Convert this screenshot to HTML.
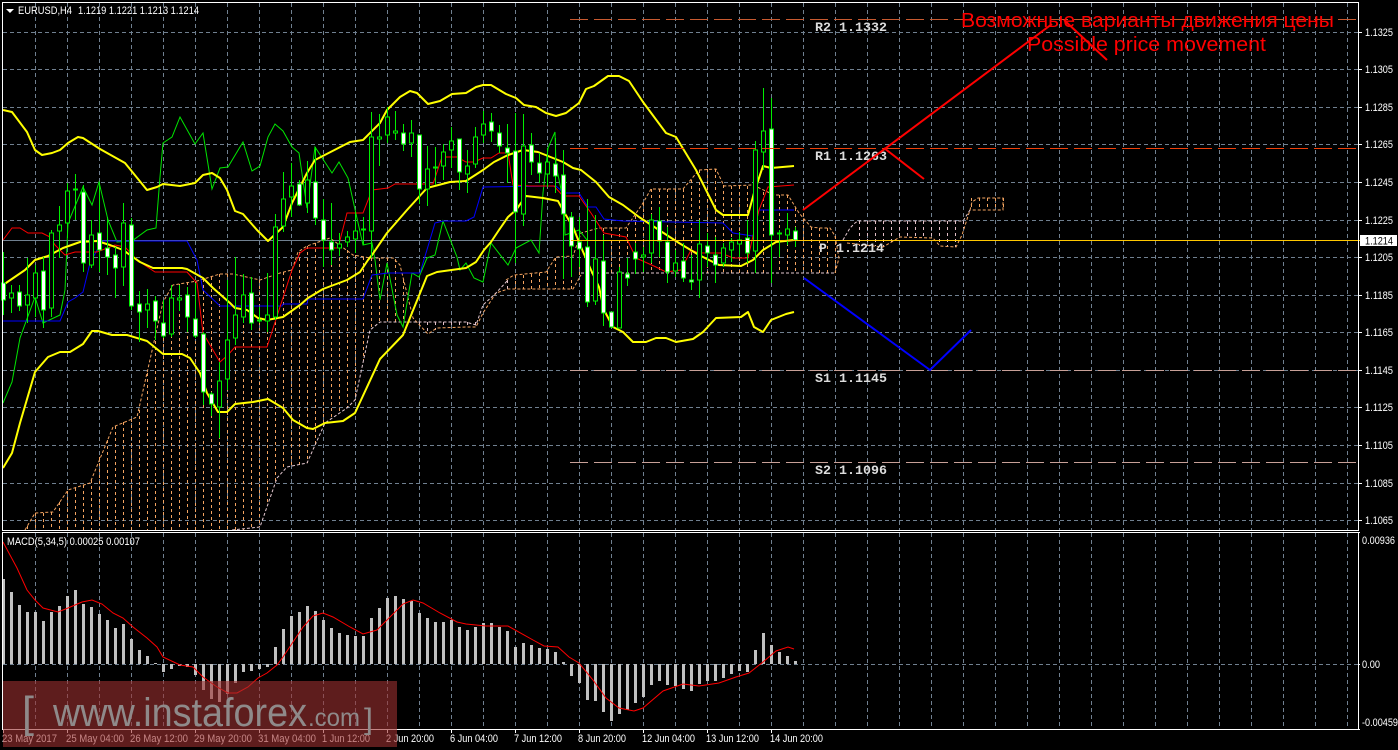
<!DOCTYPE html>
<html><head><meta charset="utf-8"><title>EURUSD,H4</title>
<style>html,body{margin:0;padding:0;background:#000;width:1398px;height:750px;overflow:hidden}svg{display:block}
.t{font-family:"Liberation Sans",sans-serif;font-size:11px;fill:#fff}
.m{font-family:"Liberation Mono",monospace;font-size:13px;font-weight:bold;fill:#ddd}
.f{fill:none}
</style></head><body>
<svg xmlns="http://www.w3.org/2000/svg" width="1398" height="750" viewBox="0 0 1398 750">
<rect width="1398" height="750" fill="#000"/>
<!-- grid -->
<g stroke="#708090" stroke-width="1" stroke-dasharray="4 3" shape-rendering="crispEdges" fill="none">
<path d="M3 32.5H1358M3 69.5H1358M3 107.5H1358M3 144.5H1358M3 182.5H1358M3 220.5H1358M3 257.5H1358M3 295.5H1358M3 332.5H1358M3 370.5H1358M3 407.5H1358M3 445.5H1358M3 483.5H1358M3 520.5H1358M3 664.5H1358"/>
<path d="M35.5 3V530M67.5 3V530M99.5 3V530M131.5 3V530M163.5 3V530M195.5 3V530M227.5 3V530M259.5 3V530M291.5 3V530M323.5 3V530M355.5 3V530M387.5 3V530M419.5 3V530M451.5 3V530M483.5 3V530M515.5 3V530M547.5 3V530M579.5 3V530M611.5 3V530M643.5 3V530M675.5 3V530M707.5 3V530M739.5 3V530M771.5 3V530M803.5 3V530M835.5 3V530M867.5 3V530M899.5 3V530M931.5 3V530M963.5 3V530M995.5 3V530M1027.5 3V530M1059.5 3V530M1091.5 3V530M1123.5 3V530M1155.5 3V530M1187.5 3V530M1219.5 3V530M1251.5 3V530M1283.5 3V530M1315.5 3V530M1347.5 3V530"/>
<path d="M35.5 533V729M67.5 533V729M99.5 533V729M131.5 533V729M163.5 533V729M195.5 533V729M227.5 533V729M259.5 533V729M291.5 533V729M323.5 533V729M355.5 533V729M387.5 533V729M419.5 533V729M451.5 533V729M483.5 533V729M515.5 533V729M547.5 533V729M579.5 533V729M611.5 533V729M643.5 533V729M675.5 533V729M707.5 533V729M739.5 533V729M771.5 533V729M803.5 533V729M835.5 533V729M867.5 533V729M899.5 533V729M931.5 533V729M963.5 533V729M995.5 533V729M1027.5 533V729M1059.5 533V729M1091.5 533V729M1123.5 533V729M1155.5 533V729M1187.5 533V729M1219.5 533V729M1251.5 533V729M1283.5 533V729M1315.5 533V729M1347.5 533V729"/>
</g>
<!-- period / price lines -->
<path d="M3 240.5H571" stroke="#708090" fill="none" shape-rendering="crispEdges"/>
<!-- cloud columns -->
<g fill="none" stroke-width="1" stroke-dasharray="3 3" shape-rendering="crispEdges">
<path stroke="#f4a460" d="M27.5 526V530M35.5 513V530M43.5 513V530M51.5 512V530M59.5 502V530M67.5 491V530M75.5 488V530M83.5 485V530M91.5 480V530M99.5 457V530M107.5 440V530M115.5 426V530M123.5 422V530M131.5 419V530M139.5 410V530M147.5 373V530M155.5 335V530M163.5 302V530M171.5 287V530M179.5 284V530M187.5 282V530M195.5 281V530M203.5 279V530M211.5 277V530M219.5 274V530M227.5 274V530M235.5 275V530M243.5 277V530M251.5 278V527M259.5 280V527M267.5 277V505M275.5 274V482M283.5 272V470M291.5 270V466M299.5 252V465M307.5 246V463M315.5 243V445M323.5 240V427M331.5 240V418M339.5 246V412M347.5 250V407M355.5 255V400M363.5 257V360M371.5 258V329M379.5 258V322M387.5 258V322M395.5 259V322M403.5 280V320M515.5 275V289M523.5 275V289M531.5 274V289M539.5 273V289M547.5 271V289M555.5 258V289M563.5 257V289M571.5 256V289M579.5 236V275M587.5 231V273M595.5 229V273M603.5 228V273M611.5 228V273M619.5 228V273M627.5 228V273M635.5 216V273M643.5 203V273M651.5 189V273M659.5 189V273M667.5 189V273M675.5 189V273M683.5 189V273M691.5 180V273M699.5 170V273M707.5 169V273M715.5 169V273M723.5 185V273M731.5 186V273M739.5 186V273M747.5 186V273M755.5 188V273M763.5 192V273M771.5 195V273M779.5 195V273M787.5 195V273M795.5 208V273M803.5 213V273M811.5 227V273M819.5 228V273M827.5 228V273M835.5 236V273M971.5 198V210M979.5 198V210M987.5 198V210M995.5 198V210M1003.5 198V210"/>
<path stroke="#e4c0c8" d="M419.5 322V328M427.5 322V334M435.5 322V330M443.5 322V328M451.5 322V327M459.5 322V327M467.5 322V326M475.5 322V327M507.5 280V289M859.5 221V246M867.5 221V246M875.5 221V246M883.5 221V247M891.5 221V245M899.5 221V237M907.5 221V238M915.5 221V238M923.5 221V238M931.5 221V238M939.5 221V245M947.5 221V247M955.5 221V247M963.5 221V228"/>
</g>
<g fill="none" stroke-width="1" stroke-dasharray="3 2">
<polyline stroke="#f4a460" points="25,530 35,513 53,512 68,490 90,483 113,427 137,417 147,373 163,302 173,285 197,281 220,274 233,274 260,280 280,273 292,270 298,252 307,246 330,238 353,255 370,258 393,258 400,265 413,318 428,334 437,328 466,327 476,327 483,313 496,293 508,289 573,289 581,275"/>
<polyline stroke="#f4a460" points="506,280 514,275 546,272 556,257 573,256 581,233 599,228 626,228 643,203 651,189 683,189 699,170 716,169 724,186 753,185 774,195 788,195 799,213 811,227 819,228 830,228 835,236 839,258 835,273"/>
<polyline stroke="#f4a460" points="847,243 883,247 900,237 933,238 940,246 956,247 962,235 970,210 972,202 978,198 1003,198 1003,210 970,210"/>
<polyline stroke="#e4c8d0" points="232,530 260,527 277,478 287,467 307,463 325,423 347,408 355,400 370,330 380,322 466,322 476,325 483,305 496,293 508,280"/>
<polyline stroke="#e4c8d0" points="581,273 836,273"/>
<polyline stroke="#e4c8d0" points="843,240 850,228 855,223 858,221 963,221 970,210"/>
</g>
<!-- chikou green -->
<polyline class="f" stroke="#00e600" points="3,403 12,382 20,338 35,297 43,323 60,315 65,290 68,223 83,187 92,205 99,182 108,220 117,242 132,241 147,230 156,228 160,177 163,143 172,137 180,117 195,144 203,133 212,189 220,168 228,167 243,142 252,171 260,166 268,137 275,124 283,131 292,147 299,153 307,208 315,147 332,173 339,162 348,178 363,245 372,243 375,260 380,300 387,263 397,315 403,327 412,273 419,277 427,258 435,255 443,221 457,257 460,270 466,263 474,278 483,282 491,243 508,265 516,248 531,240 539,253 543,193 548,148 555,132 556,165 564,204 565,235 579,230 587,240"/>
<!-- kijun blue -->
<polyline class="f" stroke="#0000ff" points="3,321 60,321 68,302 75,298 83,292 90,263 102,241 187,241 197,260 203,290 220,306 282,306 283,304 307,304 308,299 363,299 372,275 388,273 420,273 435,223 443,221 466,221 474,217 483,187 556,186 564,193 579,193 588,207 596,207 604,219 623,221 723,223 733,233 753,236 759,210 794,210"/>
<!-- tenkan red -->
<polyline class="f" stroke="#ff0000" points="3,240 12,228 20,228 28,233 42,233 50,237 55,245 65,255 75,252 97,252 115,245 125,247 137,260 155,272 187,272 197,283 203,333 220,362 228,355 235,347 267,347 292,270 300,253 307,248 338,248 347,213 363,213 372,190 388,188 395,184 433,184 442,157 457,157 466,162 474,162 483,158 491,158 499,153 508,153 513,185 529,186 554,186 563,196 579,196 591,213 604,233 626,237 636,258 656,267 666,272 681,270 691,250 699,253 721,253 733,258 748,258 759,210 768,187 794,185"/>
<!-- bollinger yellow -->
<g fill="none" stroke="#ffff00" stroke-width="2" stroke-linejoin="round">
<polyline points="3,110 12,112 27,132 35,150 42,155 52,153 60,150 68,143 78,137 83,138 100,149 125,163 147,190 157,187 163,184 180,186 195,183 203,175 212,173 220,178 227,190 235,211 243,214 257,230 268,241 283,227 292,203 307,173 315,160 350,142 363,140 380,123 387,110 400,97 410,91 417,93 428,104 440,101 452,94 466,93 476,87 483,85 491,85 506,94 516,98 524,105 536,107 546,113 556,116 566,113 579,103 586,89 594,86 608,76 619,76 629,81 643,102 666,133 676,137 696,170 716,210 723,215 748,215 754,193 763,166 771,168 794,166"/>
<polyline points="3,285 25,270 35,260 48,256 63,248 80,242 97,241 110,245 123,250 140,262 153,268 182,268 187,269 203,278 213,288 230,303 235,308 247,310 258,318 267,320 283,317 300,305 308,298 323,289 347,280 360,272 368,260 372,255 387,233 407,210 427,188 450,182 466,181 483,170 494,162 508,155 523,150 538,152 563,162 573,168 581,170 596,182 609,197 623,205 639,217 659,230 679,243 699,255 719,265 741,266 753,260 763,250 776,242 794,240"/>
<polyline points="3,468 12,453 20,423 35,372 48,357 60,352 70,352 83,344 92,331 98,331 112,335 127,335 147,341 163,354 182,354 190,358 200,373 207,393 218,412 227,412 235,404 253,402 268,399 283,408 293,420 307,428 313,429 325,423 343,421 355,413 380,359 403,335 427,276 437,272 466,268 476,262 484,250 491,242 499,230 508,217 516,210 526,196 543,198 558,201 564,212 573,227 581,247 591,270 599,287 604,310 613,327 623,332 633,342 646,342 656,338 666,338 676,342 693,339 703,332 716,318 741,317 748,312 754,327 763,332 771,320 786,314 794,312"/>
</g>
<!-- candles -->
<g shape-rendering="crispEdges" stroke="#00ee00" stroke-width="1">
<path fill="none" d="M3.5 252V315M11.5 285V313M19.5 285V311M27.5 258V323M35.5 265V317M43.5 257V328M51.5 230V317M59.5 206V258M67.5 183V238M75.5 174V220M83.5 185V272M91.5 220V268M99.5 182V272M107.5 217V275M115.5 247V298M123.5 203V286M131.5 218V310M139.5 291V342M147.5 289V328M155.5 296V340M163.5 300V338M171.5 285V337M179.5 285V311M187.5 287V332M195.5 283V338M203.5 332V405M211.5 392V416M219.5 362V438M227.5 280V390M235.5 257V345M243.5 274V323M251.5 277V330M259.5 307V323M267.5 273V332M275.5 214V320M283.5 172V232M291.5 163V217M299.5 180V206M307.5 161V213M315.5 147V225M323.5 199V267M331.5 203V265M339.5 233V256M347.5 231V247M355.5 212V253M363.5 217V245M371.5 112V258M379.5 114V166M387.5 107V143M395.5 111V140M403.5 124V151M411.5 120V157M419.5 135V204M427.5 146V206M435.5 147V185M443.5 144V180M451.5 127V168M459.5 139V190M467.5 150V193M475.5 127V168M483.5 111V143M491.5 113V142M499.5 125V153M507.5 124V183M515.5 113V263M523.5 114V226M531.5 133V175M539.5 153V183M547.5 148V187M555.5 138V193M563.5 150V279M571.5 212V277M579.5 217V267M587.5 199V307M595.5 215V305M603.5 235V326M611.5 312V328M619.5 267V328M627.5 258V286M635.5 243V274M643.5 247V272M651.5 214V263M659.5 207V257M667.5 227V283M675.5 250V277M683.5 243V282M691.5 255V290M699.5 220V298M707.5 233V267M715.5 237V283M723.5 243V267M731.5 238V262M739.5 232V257M747.5 220V263M755.5 141V273M763.5 88V170M771.5 98V283M779.5 230V257M787.5 213V245M795.5 227V247"/>
<path fill="#000" d="M9.5 293h4V298h-4zM25.5 295h4V305h-4zM33.5 273h4V298h-4zM49.5 233h4V308h-4zM57.5 225h4V231h-4zM65.5 191h4V223h-4zM73.5 189h4V190h-4zM89.5 235h4V265h-4zM121.5 223h4V267h-4zM145.5 304h4V310h-4zM169.5 298h4V334h-4zM177.5 298h4V300h-4zM217.5 381h4V407h-4zM225.5 340h4V379h-4zM233.5 315h4V338h-4zM241.5 295h4V317h-4zM257.5 320h4V321h-4zM265.5 315h4V321h-4zM273.5 227h4V317h-4zM281.5 199h4V226h-4zM289.5 186h4V197h-4zM305.5 180h4V203h-4zM337.5 244h4V248h-4zM345.5 237h4V242h-4zM353.5 231h4V239h-4zM361.5 229h4V230h-4zM369.5 137h4V231h-4zM377.5 137h4V139h-4zM385.5 117h4V135h-4zM393.5 131h4V133h-4zM409.5 133h4V143h-4zM425.5 169h4V189h-4zM433.5 167h4V168h-4zM441.5 152h4V166h-4zM449.5 141h4V150h-4zM465.5 166h4V174h-4zM473.5 137h4V164h-4zM481.5 124h4V135h-4zM521.5 146h4V214h-4zM545.5 162h4V174h-4zM593.5 259h4V301h-4zM617.5 272h4V328h-4zM641.5 255h4V257h-4zM649.5 220h4V253h-4zM673.5 263h4V271h-4zM697.5 244h4V280h-4zM721.5 248h4V263h-4zM729.5 242h4V250h-4zM737.5 240h4V244h-4zM753.5 150h4V251h-4zM761.5 131h4V152h-4zM777.5 233h4V234h-4zM785.5 229h4V235h-4z"/>
<path fill="#fff" d="M1.5 283h4V300h-4zM17.5 292h4V306h-4zM41.5 271h4V310h-4zM81.5 192h4V263h-4zM97.5 233h4V250h-4zM105.5 248h4V257h-4zM113.5 255h4V268h-4zM129.5 225h4V306h-4zM137.5 304h4V312h-4zM153.5 301h4V321h-4zM161.5 323h4V336h-4zM185.5 295h4V317h-4zM193.5 319h4V336h-4zM201.5 334h4V392h-4zM209.5 394h4V404h-4zM249.5 293h4V323h-4zM297.5 184h4V205h-4zM313.5 182h4V218h-4zM321.5 220h4V240h-4zM329.5 242h4V250h-4zM401.5 133h4V144h-4zM417.5 135h4V189h-4zM457.5 139h4V172h-4zM489.5 122h4V131h-4zM497.5 133h4V146h-4zM505.5 148h4V153h-4zM513.5 151h4V212h-4zM529.5 145h4V162h-4zM537.5 163h4V173h-4zM553.5 164h4V176h-4zM561.5 175h4V214h-4zM569.5 217h4V246h-4zM577.5 242h4V249h-4zM585.5 247h4V302h-4zM601.5 261h4V313h-4zM609.5 312h4V327h-4zM625.5 274h4V278h-4zM633.5 252h4V259h-4zM657.5 221h4V241h-4zM665.5 242h4V272h-4zM681.5 261h4V278h-4zM689.5 280h4V282h-4zM705.5 246h4V253h-4zM713.5 255h4V265h-4zM745.5 238h4V253h-4zM769.5 129h4V235h-4zM793.5 231h4V240h-4z"/>
</g>
<!-- pivot lines -->
<g fill="none" stroke-dasharray="18 6" shape-rendering="crispEdges">
<path stroke="#c85a30" d="M570 19.5H1358"/>
<path stroke="#f0400a" d="M570 148.5H1358"/>
<path stroke="#c8a098" d="M570 370.5H1358M570 462.5H1358"/>
</g>
<path d="M571 240.5H1360" stroke="#ffc800" fill="none" shape-rendering="crispEdges"/>
<!-- pivot labels -->
<text class="m" x="815" y="31" textLength="72" lengthAdjust="spacingAndGlyphs">R2 1.1332</text>
<text class="m" x="815" y="160" textLength="72" lengthAdjust="spacingAndGlyphs">R1 1.1263</text>
<text class="m" x="819" y="252">P</text>
<text class="m" x="836" y="252" textLength="48" lengthAdjust="spacingAndGlyphs">1.1214</text>
<text class="m" x="815" y="382" textLength="72" lengthAdjust="spacingAndGlyphs">S1 1.1145</text>
<text class="m" x="815" y="474" textLength="72" lengthAdjust="spacingAndGlyphs">S2 1.1096</text>
<!-- forecast lines -->
<g fill="none" stroke-width="2">
<polyline stroke="#ff0000" points="803,210 1052,24"/>
<polyline stroke="#ff0000" points="884,148 924,179"/>
<polyline stroke="#ff0000" points="1064,20 1107,60"/>
<polyline stroke="#0000ff" points="804,278 930,370 971,330"/>
</g>
<text x="961" y="27" font-family="'Liberation Sans',sans-serif" font-size="20" fill="#ff0000" textLength="373" lengthAdjust="spacingAndGlyphs">Возможные варианты движения цены</text>
<text x="1027" y="51" font-family="'Liberation Sans',sans-serif" font-size="20" fill="#ff0000" textLength="239" lengthAdjust="spacingAndGlyphs">Possible price movement</text>
<!-- macd bars -->
<path fill="none" stroke="#c0c0c0" stroke-width="3" shape-rendering="crispEdges" d="M3.5 664V579M11.5 664V592M19.5 664V605M27.5 664V612M35.5 664V612M43.5 664V621M51.5 664V612M59.5 664V606M67.5 664V596M75.5 664V590M83.5 664V604M91.5 664V607M99.5 664V614M107.5 664V620M115.5 664V628M123.5 664V624M131.5 664V639M139.5 664V650M147.5 664V656M155.5 664V663M163.5 664V672M171.5 664V669M179.5 664V666M187.5 664V667M195.5 664V675M203.5 664V690M211.5 664V699M219.5 664V702M227.5 664V694M235.5 664V683M243.5 664V672M251.5 664V671M259.5 664V669M267.5 664V667M275.5 664V647M283.5 664V629M291.5 664V616M299.5 664V612M307.5 664V606M315.5 664V611M323.5 664V620M331.5 664V628M339.5 664V633M347.5 664V635M355.5 664V636M363.5 664V636M371.5 664V618M379.5 664V608M387.5 664V598M395.5 664V596M403.5 664V599M411.5 664V601M419.5 664V613M427.5 664V618M435.5 664V622M443.5 664V622M451.5 664V620M459.5 664V627M467.5 664V630M475.5 664V627M483.5 664V623M491.5 664V623M499.5 664V627M507.5 664V631M515.5 664V647M523.5 664V643M531.5 664V645M539.5 664V648M547.5 664V649M555.5 664V652M563.5 664V662M571.5 664V676M579.5 664V683M587.5 664V700M595.5 664V701M603.5 664V712M611.5 664V721M619.5 664V714M627.5 664V710M635.5 664V703M643.5 664V697M651.5 664V685M659.5 664V681M667.5 664V685M675.5 664V686M683.5 664V689M691.5 664V691M699.5 664V684M707.5 664V681M715.5 664V681M723.5 664V678M731.5 664V674M739.5 664V671M747.5 664V672M755.5 664V650M763.5 664V633M771.5 664V645M779.5 664V652M787.5 664V656M795.5 664V661"/>
<polyline class="f" stroke="#ff0000" points="3,542 17,568 27,590 35,600 43,608 58,612 68,608 82,602 92,600 102,604 113,613 123,618 133,627 147,638 157,647 163,657 180,665 193,667 203,677 217,687 228,693 237,693 248,687 258,678 267,673 277,665 283,657 293,642 303,627 313,616 323,613 333,617 350,627 363,634 377,630 390,617 403,604 413,600 423,603 440,613 457,622 466,624 486,626 508,626 533,640 544,646 558,647 569,657 579,663 593,680 606,698 619,708 634,711 643,708 663,691 683,684 699,686 719,683 736,677 749,673 763,662 776,651 788,647 794,649"/>
<!-- frames -->
<g fill="none" stroke="#fff" stroke-width="1" shape-rendering="crispEdges">
<path d="M2.5 2.5H1358.5V530.5H2.5ZM2.5 532.5H1358.5V729.5H2.5Z"/>
<path d="M1358 32.5h4M1358 69.5h4M1358 107.5h4M1358 144.5h4M1358 182.5h4M1358 220.5h4M1358 257.5h4M1358 295.5h4M1358 332.5h4M1358 370.5h4M1358 407.5h4M1358 445.5h4M1358 483.5h4M1358 520.5h4M1358 532.5h2M1358 664.5h2M1358 729.5h2"/>
<path d="M3.5 729V733M67.5 729V733M131.5 729V733M195.5 729V733M259.5 729V733M323.5 729V733M387.5 729V733M451.5 729V733M515.5 729V733M579.5 729V733M643.5 729V733M707.5 729V733M771.5 729V733"/>
</g>
<!-- header text -->
<path d="M6 9h8l-4 4z" fill="#fff"/>
<text class="t" x="18" y="14" textLength="54" lengthAdjust="spacingAndGlyphs">EURUSD,H4</text>
<text class="t" x="78" y="14" textLength="121" lengthAdjust="spacingAndGlyphs">1.1219 1.1221 1.1213 1.1214</text>
<text class="t" x="7" y="545" textLength="133" lengthAdjust="spacingAndGlyphs">MACD(5,34,5) 0.00025 0.00107</text>
<!-- axis labels -->
<g class="t">
<text class="t" x="1365" y="36" textLength="28" lengthAdjust="spacingAndGlyphs">1.1325</text>
<text class="t" x="1365" y="73" textLength="28" lengthAdjust="spacingAndGlyphs">1.1305</text>
<text class="t" x="1365" y="111" textLength="28" lengthAdjust="spacingAndGlyphs">1.1285</text>
<text class="t" x="1365" y="148" textLength="28" lengthAdjust="spacingAndGlyphs">1.1265</text>
<text class="t" x="1365" y="186" textLength="28" lengthAdjust="spacingAndGlyphs">1.1245</text>
<text class="t" x="1365" y="224" textLength="28" lengthAdjust="spacingAndGlyphs">1.1225</text>
<text class="t" x="1365" y="261" textLength="28" lengthAdjust="spacingAndGlyphs">1.1205</text>
<text class="t" x="1365" y="299" textLength="28" lengthAdjust="spacingAndGlyphs">1.1185</text>
<text class="t" x="1365" y="336" textLength="28" lengthAdjust="spacingAndGlyphs">1.1165</text>
<text class="t" x="1365" y="374" textLength="28" lengthAdjust="spacingAndGlyphs">1.1145</text>
<text class="t" x="1365" y="411" textLength="28" lengthAdjust="spacingAndGlyphs">1.1125</text>
<text class="t" x="1365" y="449" textLength="28" lengthAdjust="spacingAndGlyphs">1.1105</text>
<text class="t" x="1365" y="487" textLength="28" lengthAdjust="spacingAndGlyphs">1.1085</text>
<text class="t" x="1365" y="524" textLength="28" lengthAdjust="spacingAndGlyphs">1.1065</text>
<text class="t" x="1362" y="544" textLength="33" lengthAdjust="spacingAndGlyphs">0.00936</text>
<text class="t" x="1362" y="668" textLength="18" lengthAdjust="spacingAndGlyphs">0.00</text>
<text class="t" x="1362" y="726" textLength="36" lengthAdjust="spacingAndGlyphs">-0.00459</text>
</g>
<rect x="1360" y="235" width="37" height="11" fill="#fff"/>
<text class="t" x="1365" y="244.5" style="fill:#000" textLength="28" lengthAdjust="spacingAndGlyphs">1.1214</text>
<!-- time labels -->
<text class="t" x="2" y="742" textLength="55" lengthAdjust="spacingAndGlyphs">23 May 2017</text>
<text class="t" x="66" y="742" textLength="58" lengthAdjust="spacingAndGlyphs">25 May 04:00</text>
<text class="t" x="130" y="742" textLength="58" lengthAdjust="spacingAndGlyphs">26 May 12:00</text>
<text class="t" x="194" y="742" textLength="58" lengthAdjust="spacingAndGlyphs">29 May 20:00</text>
<text class="t" x="258" y="742" textLength="58" lengthAdjust="spacingAndGlyphs">31 May 04:00</text>
<text class="t" x="322" y="742" textLength="48" lengthAdjust="spacingAndGlyphs">1 Jun 12:00</text>
<text class="t" x="386" y="742" textLength="48" lengthAdjust="spacingAndGlyphs">2 Jun 20:00</text>
<text class="t" x="450" y="742" textLength="48" lengthAdjust="spacingAndGlyphs">6 Jun 04:00</text>
<text class="t" x="514" y="742" textLength="48" lengthAdjust="spacingAndGlyphs">7 Jun 12:00</text>
<text class="t" x="578" y="742" textLength="48" lengthAdjust="spacingAndGlyphs">8 Jun 20:00</text>
<text class="t" x="642" y="742" textLength="53" lengthAdjust="spacingAndGlyphs">12 Jun 04:00</text>
<text class="t" x="706" y="742" textLength="53" lengthAdjust="spacingAndGlyphs">13 Jun 12:00</text>
<text class="t" x="770" y="742" textLength="53" lengthAdjust="spacingAndGlyphs">14 Jun 20:00</text>
<!-- watermark -->
<rect x="3" y="681" width="394" height="66" fill="rgb(157,48,48)" fill-opacity="0.6"/>
<g font-family="'Liberation Sans',sans-serif" fill="#8f8a8a">
<text x="22" y="727" font-size="44" textLength="12" lengthAdjust="spacingAndGlyphs">[</text>
<text x="53" y="726" font-size="40" textLength="254" lengthAdjust="spacingAndGlyphs">www.instaforex</text>
<text x="308" y="726" font-size="25" textLength="52" lengthAdjust="spacingAndGlyphs">.com</text>
<text x="364" y="729" font-size="30" textLength="9" lengthAdjust="spacingAndGlyphs">]</text>
</g>
</svg>
</body></html>
